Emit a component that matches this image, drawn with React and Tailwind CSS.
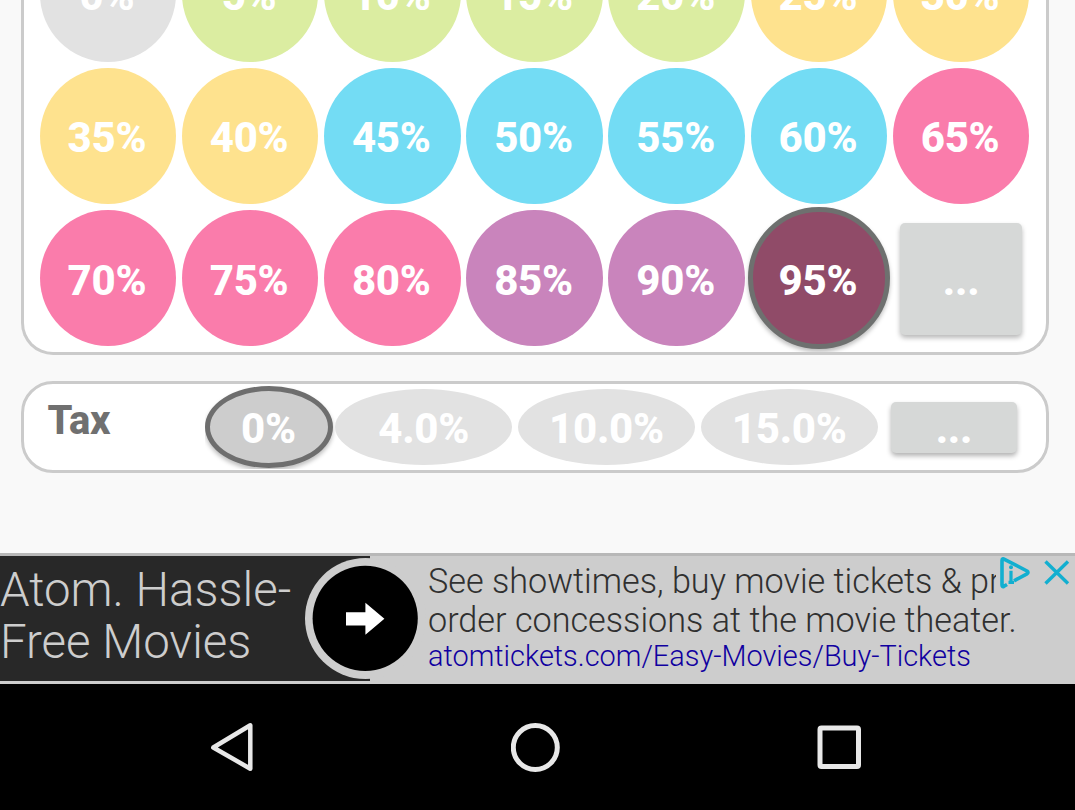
const GRAY = 'bg-[#e2e2e2]';
const GREEN = 'bg-[#dbeda1]';
const YELLOW = 'bg-[#fee28e]';
const CYAN = 'bg-[#73dcf4]';
const PINK = 'bg-[#fa7cab]';
const PURPLE = 'bg-[#c984bc]';

const discounts = [
  ['0%', GRAY], ['5%', GREEN], ['10%', GREEN], ['15%', GREEN], ['20%', GREEN], ['25%', YELLOW], ['30%', YELLOW],
  ['35%', YELLOW], ['40%', YELLOW], ['45%', CYAN], ['50%', CYAN], ['55%', CYAN], ['60%', CYAN], ['65%', PINK],
  ['70%', PINK], ['75%', PINK], ['80%', PINK], ['85%', PURPLE], ['90%', PURPLE],
];

const labelClass = 'flex items-center justify-center text-[42px] leading-none font-extrabold tracking-[-0.3px] text-white';

function Discounts() {
  return (
    <section className="flex h-[355px] flex-col justify-end overflow-hidden rounded-b-[32px] border-[3px] border-t-0 border-[#cbcbcb] bg-white pr-[13.8px] pb-[2.8px] pl-[12.8px]">
      <div className="grid shrink-0 auto-rows-[142.2px] grid-cols-7">
        {discounts.map(([label, color]) => (
          <div key={label} className="p-[2.8px]">
            <button className={`${labelClass} ${color} h-full w-full rounded-full pt-[5px] pr-[2px]`}>{label}</button>
          </div>
        ))}
        <button className={`${labelClass} rounded-full border-[5px] border-[#6e706f] bg-[#904b68] pt-[5px] pr-[2px] shadow-[0_3px_4px_rgba(0,0,0,0.25)]`}>
          95%
        </button>
        <div className="flex items-center justify-center pt-[1px]">
          <button className={`${labelClass} h-[112px] w-[122px] rounded-[5px] bg-[#d6d8d7] pt-[5px] shadow-[0_3px_5px_rgba(0,0,0,0.28)]`}>
            ...
          </button>
        </div>
      </div>
    </section>
  );
}

function Tax() {
  return (
    <section className="mt-[26px] flex h-[92px] rounded-[32px] border-[3px] border-[#cbcbcb] bg-white pl-[23.5px]">
      <h2 className="w-[157px] pt-[13px] text-[40px] leading-[47px] font-extrabold tracking-[-0.4px] text-[#707070]">Tax</h2>
      <div className="flex h-[85px] items-center overflow-hidden pt-[1px]">
        <button className={`${labelClass} h-[82px] w-[128px] rounded-[50%] border-[5px] border-[#6e6e6e] bg-[#cdcdcd] pt-[3px] shadow-[0_3px_4px_rgba(0,0,0,0.25)]`}>
          0%
        </button>
        <div className="flex gap-[5.5px] pl-[2.5px]">
          {['4.0%', '10.0%', '15.0%'].map((label) => (
            <button key={label} className={`${labelClass} ${GRAY} h-[76px] w-[177.3px] rounded-[50%] pt-[3px]`}>{label}</button>
          ))}
        </div>
        <div className="pr-5 pl-[13px]">
          <button className={`${labelClass} h-[51px] w-[126px] rounded-[5px] bg-[#d6d8d7] pt-[4px] shadow-[0_3px_5px_rgba(0,0,0,0.3)]`}>
            ...
          </button>
        </div>
      </div>
    </section>
  );
}

function Ad() {
  return (
    <aside className="relative flex h-[131px] border-t-[3px] border-[#b8b8b8] bg-[#cdcdcd] font-light">
      <div className="flex h-[125px] w-[370px] shrink-0 bg-[#282828]">
        <p className="w-[305px] shrink-0 pt-[7.5px] text-[47.4px] leading-[52.5px] whitespace-nowrap text-[#cdcdcd]">
          Atom. Hassle-
          <br />
          Free Movies
        </p>
        <svg className="mt-[2px] h-[122px] w-[122px] shrink-0" viewBox="0 0 122 122">
          <circle cx="60.5" cy="60.5" r="60.5" fill="#cdcdcd" />
          <circle cx="60.2" cy="60.3" r="52.6" fill="#000" />
          <path d="M41 54.3h19.4v-9.5l19 16-19 16v-9.3H41z" fill="#fff" />
        </svg>
      </div>
      <div className="pt-[6px] pl-[58px] text-[34.2px] leading-[38.7px] whitespace-nowrap text-[#303030]">
        <p>See showtimes, buy movie tickets &amp; pr</p>
        <p>order concessions at the movie theater.</p>
        <a className="block text-[28.9px] leading-[34px] text-[#1000a0]">atomtickets.com/Easy-Movies/Buy-Tickets</a>
      </div>
      <div className="absolute top-0 right-0 flex h-[36px] w-[79px] bg-[#cdcdcd]">
        <svg className="h-[36px] w-[79px]" viewBox="996 556 79 36" fill="none" stroke="#12afd0">
          <path d="M1007 584.5L1004 586.3Q1002 587.3 1002 585V560.5Q1002 558 1004.5 559.3L1027 571Q1029 572.4 1027 573.8L1014 580.8" strokeWidth="3.6" strokeLinejoin="round" />
          <path d="M1011 570.8v11.5M1008.5 582.3h5.5" strokeWidth="3.2" />
          <circle cx="1011" cy="567.3" r="2" fill="#12afd0" stroke="none" />
          <path d="M1045.5 561.5l22.5 22M1068 561.5l-22.5 22" strokeWidth="3.4" />
        </svg>
      </div>
    </aside>
  );
}

function NavBar() {
  return (
    <nav className="flex h-[126px] items-center justify-between bg-black pr-[213px] pl-[209px]">
      <svg className="h-[54px] w-[46px]" viewBox="0 0 46 54" fill="none" stroke="#e8e8e8" strokeWidth="4.5" strokeLinejoin="round">
        <path d="M41.3 5.3v43.4L4.3 27.5z" />
      </svg>
      <svg className="h-[50px] w-[50px]" viewBox="0 0 50 50" fill="none" stroke="#e8e8e8" strokeWidth="5">
        <circle cx="24.3" cy="25.5" r="22" />
      </svg>
      <svg className="h-[46px] w-[46px]" viewBox="0 0 46 46" fill="none" stroke="#e8e8e8" strokeWidth="5">
        <rect x="4" y="4" width="38.5" height="38.5" rx="1.5" />
      </svg>
    </nav>
  );
}

export default function App() {
  return (
    <div className="flex h-[810px] w-[1075px] flex-col overflow-hidden bg-[#f9f9f9] font-['Roboto',sans-serif]">
      <main className="h-[553px] pr-[26px] pl-[21px]">
        <Discounts />
        <Tax />
      </main>
      <Ad />
      <NavBar />
    </div>
  );
}
